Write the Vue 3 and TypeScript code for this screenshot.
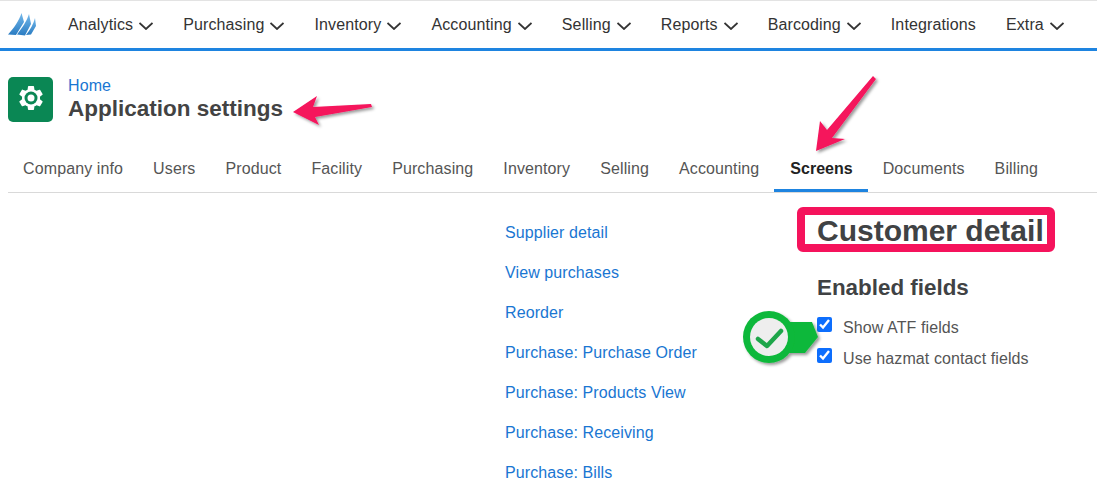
<script setup lang="ts">
const navItems: { label: string; chevron: boolean }[] = [
  { label: 'Analytics', chevron: true },
  { label: 'Purchasing', chevron: true },
  { label: 'Inventory', chevron: true },
  { label: 'Accounting', chevron: true },
  { label: 'Selling', chevron: true },
  { label: 'Reports', chevron: true },
  { label: 'Barcoding', chevron: true },
  { label: 'Integrations', chevron: false },
  { label: 'Extra', chevron: true },
]
const tabs: string[] = ['Company info', 'Users', 'Product', 'Facility', 'Purchasing', 'Inventory', 'Selling', 'Accounting', 'Screens', 'Documents', 'Billing']
const links: string[] = ['Supplier detail', 'View purchases', 'Reorder', 'Purchase: Purchase Order', 'Purchase: Products View', 'Purchase: Receiving', 'Purchase: Bills']
</script>

<template>
  <div class="page">
    <header class="topbar">
      <svg class="logo" width="30" height="24" viewBox="0 0 30 24">
        <defs>
          <linearGradient id="sail" x1="0" y1="0" x2="0" y2="1">
            <stop offset="0" stop-color="#74b8ea" />
            <stop offset="1" stop-color="#2a7cc2" />
          </linearGradient>
        </defs>
        <path d="M13.500 0 L16 9 L8 22 L0 21.500 C6 15 11 8 13.500 0Z" fill="url(#sail)" />
        <path d="M21 1 L23 11 L17 22.500 L9 21.500 C14 15 19 8 21 1Z" fill="url(#sail)" />
        <path d="M27 5 L28 13 L23 21.500 L18 22 C22 17 25.500 11 27 5Z" fill="url(#sail)" />
      </svg>
      <nav class="nav">
        <span v-for="item in navItems" :key="item.label" class="nav-item">
          {{ item.label }}
          <svg v-if="item.chevron" width="14" height="8" viewBox="0 0 14 8" class="chev">
            <path d="M.5 1 L7 7 L13.500 1" fill="none" stroke="#333" stroke-width="1.800" />
          </svg>
        </span>
      </nav>
    </header>

    <section class="heading">
      <div class="app-icon">
        <svg class="gear" width="30" height="30" viewBox="0 0 24 24">
          <path fill="#fff" d="M19.14 12.94c.04-.3.06-.61.06-.94 0-.32-.02-.64-.07-.94l2.03-1.58c.18-.14.23-.41.12-.61l-1.92-3.32c-.12-.22-.37-.29-.59-.22l-2.39.96c-.5-.38-1.03-.7-1.62-.94l-.36-2.54c-.04-.24-.24-.41-.48-.41h-3.84c-.24 0-.43.17-.47.41l-.36 2.54c-.59.24-1.13.57-1.62.94l-2.39-.96c-.22-.08-.47 0-.59.22L2.74 8.87c-.12.21-.08.47.12.61l2.03 1.58c-.05.3-.09.63-.09.94s.02.64.07.94l-2.03 1.58c-.18.14-.23.41-.12.61l1.92 3.32c.12.22.37.29.59.22l2.39-.96c.5.38 1.03.7 1.62.94l.36 2.54c.05.24.24.41.48.41h3.84c.24 0 .44-.17.47-.41l.36-2.54c.59-.24 1.13-.56 1.62-.94l2.39.96c.22.08.47 0 .59-.22l1.92-3.32c.12-.22.07-.47-.12-.61l-2.01-1.58z" />
          <circle cx="12" cy="12" r="5.200" fill="#0a8754" />
          <circle cx="12" cy="12" r="2.800" fill="#fff" />
        </svg>
      </div>
      <div class="heading-text">
        <a class="home">Home</a>
        <h1>Application settings</h1>
      </div>
    </section>

    <div class="tabs">
      <span v-for="tab in tabs" :key="tab" class="tab" :class="{ active: tab === 'Screens' }">{{ tab }}</span>
    </div>

    <main class="content">
      <ul class="links">
        <li v-for="link in links" :key="link">{{ link }}</li>
      </ul>
      <div class="detail">
        <h2>Customer detail</h2>
        <h3>Enabled fields</h3>
        <label class="check"><input type="checkbox" checked /> <span>Show ATF fields</span></label>
        <label class="check"><input type="checkbox" checked /> <span>Use hazmat contact fields</span></label>
      </div>
    </main>

    <svg class="overlay" width="1097" height="480" viewBox="0 0 1097 480">
      <defs>
        <filter id="shadow" x="-20%" y="-20%" width="150%" height="150%">
          <feDropShadow dx="2" dy="2" stdDeviation="1.500" flood-color="#000" flood-opacity="0.4" />
        </filter>
      </defs>
      <rect x="801" y="211" width="250" height="37" rx="2" fill="none" stroke="#f5135c" stroke-width="8" />
      <polygon points="293,112 317,96 313,107 371,104 372,107 315,117 319,125" fill="#f5135c" filter="url(#shadow)" />
      <polygon points="816,151 820,121 827,130 873,76 876,79 832,138 845,139" fill="#f5135c" filter="url(#shadow)" />
      <g filter="url(#shadow)">
        <polygon points="785,322 812,322 818,337 805,353 785,353" fill="#0cb83a" />
        <circle cx="769" cy="337" r="26" fill="#0cb83a" />
      </g>
      <circle cx="769" cy="337" r="19" fill="#eeeeee" />
      <path d="M758 339 L767 346 L781 331" fill="none" stroke="#1ea64a" stroke-width="4.500" stroke-linejoin="round" stroke-linecap="round" />
    </svg>
  </div>
</template>

<style>
body { margin: 0; background: #fff; }
</style>

<style scoped>
.page {
  position: relative;
  width: 1097px;
  height: 480px;
  overflow: hidden;
  background: #fff;
  font-family: "Liberation Sans", Arial, sans-serif;
  font-size: 16px;
  letter-spacing: 0.1px;
  color: #444;
}
.topbar {
  display: flex;
  align-items: center;
  height: 47px;
  border-top: 1px solid #e3e3e3;
  border-bottom: 3px solid #1e84e0;
  padding-left: 8px;
}
.logo { margin-top: 1px; }
.nav {
  display: flex;
  gap: 30px;
  margin-left: 30px;
}
.nav-item {
  display: flex;
  align-items: center;
  gap: 6px;
  color: #333;
  white-space: nowrap;
  letter-spacing: 0.125px;
}
.chev { margin-top: 2px; }
.heading {
  display: flex;
  align-items: center;
  gap: 15px;
  padding: 25px 0 0 8px;
}
.app-icon {
  width: 45px;
  height: 45px;
  border-radius: 5px;
  background: #0a8754;
  display: flex;
  align-items: center;
  justify-content: center;
}
.gear { margin-bottom: 3px; }
.heading-text { display: flex; flex-direction: column; }
.home { color: #1976d2; line-height: 20px; margin-top: 0; }
h1 {
  margin: 0;
  font-size: 22.5px;
  letter-spacing: 0;
  line-height: 26px;
  font-weight: 700;
  color: #434343;
}
.tabs {
  display: flex;
  margin: 34px 0 0 8px;
  height: 36px;
  width: 1089px;
  border-bottom: 1px solid #d9d9d9;
  box-sizing: content-box;
}
.tab {
  padding: 0 15px;
  line-height: 26px;
  color: #555;
  white-space: nowrap;
  height: 33px;
  letter-spacing: 0.115px;
}
.tab.active {
  font-weight: 700;
  color: #222;
  border-bottom: 3px solid #1e84e0;
  padding-left: 16px;
  letter-spacing: 0;
}
.content {
  display: flex;
  padding: 0 0 0 505px;
}
.links {
  list-style: none;
  margin: 0;
  padding: 31px 0 0;
  width: 312px;
  color: #1976d2;
}
.links li { height: 40px; line-height: 18px; }
.detail { padding-top: 20px; }
h2 {
  margin: 0;
  font-size: 30px;
  letter-spacing: 0;
  line-height: 36px;
  font-weight: 700;
  color: #404244;
  white-space: nowrap;
}
h3 {
  margin: 26px 0 0;
  font-size: 22.4px;
  letter-spacing: 0;
  line-height: 26px;
  font-weight: 700;
  color: #404244;
}
.check {
  display: flex;
  align-items: center;
  height: 31.5px;
  white-space: nowrap;
  color: #555;
}
h3 + .check { margin-top: 9px; }
.check span { margin-top: 4px; }
.check input {
  width: 15px;
  height: 15px;
  margin: 0 11px 3px 0;
  accent-color: #0d6efd;
}
.overlay {
  position: absolute;
  left: 0;
  top: 0;
  pointer-events: none;
}
</style>
